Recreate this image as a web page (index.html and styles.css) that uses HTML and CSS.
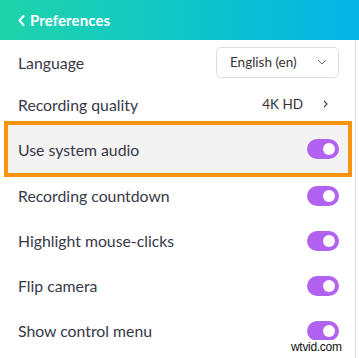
FILE: index.html
```html
<!DOCTYPE html>
<html>
<head>
<meta charset="utf-8">
<link rel="stylesheet" href="styles.css">
</head>
<body>
<div class="page">
  <header class="header">
    <svg class="back" width="7" height="11" viewBox="0 0 7 11"><path d="M5.5 1 L1.5 5.5 L5.5 10" fill="none" stroke="#fff" stroke-width="2" stroke-linecap="round" stroke-linejoin="round"/></svg>
    <span class="title">Preferences</span>
  </header>
  <main class="list">
    <div class="row row-lang">
      <span class="label">Language</span>
      <div class="select">
        <span>English (en)</span>
        <svg width="10" height="6" viewBox="0 0 10 6"><path d="M1 1 L5 5 L9 1" fill="none" stroke="#666" stroke-width="1"/></svg>
      </div>
    </div>
    <div class="row row-quality">
      <span class="label">Recording quality</span>
      <div class="value">
        <span>4K HD</span>
        <svg width="5" height="8" viewBox="0 0 5 8"><path d="M1 1 L4 4 L1 7" fill="none" stroke="#444" stroke-width="1.1"/></svg>
      </div>
    </div>
    <div class="row row-audio">
      <span class="label">Use system audio</span>
      <span class="toggle"></span>
    </div>
    <div class="row row-countdown">
      <span class="label">Recording countdown</span>
      <span class="toggle"></span>
    </div>
    <div class="row">
      <span class="label">Highlight mouse-clicks</span>
      <span class="toggle"></span>
    </div>
    <div class="row">
      <span class="label">Flip camera</span>
      <span class="toggle"></span>
    </div>
    <div class="row">
      <span class="label">Show control menu</span>
      <span class="toggle"></span>
    </div>
  </main>
  <div class="watermark">wtvid.com</div>
</div>
</body>
</html>
```
FILE: styles.css
```css
* { box-sizing: border-box; }
html, body { margin: 0; padding: 0; background: #fff; }
body { font-family: Lato, "Open Sans", sans-serif; color: #383848; }
.page { position: relative; width: 359px; height: 358px; overflow: hidden; }
.header {
  height: 40px;
  background: linear-gradient(90deg, #1fd3aa 0%, #10c6c8 50%, #05b3e6 100%);
  display: flex;
  align-items: center;
  padding-left: 18px;
  gap: 5px;
  color: #fff;
}
.back { display: block; margin-top: 1px; }
.title { font-size: 15px; font-weight: 700; letter-spacing: 0.1px; }
.list {
  width: 356px;
  height: 318px;
  border-right: 1px solid #dcdcdc;
}
.row {
  height: 45px;
  display: flex;
  align-items: center;
  justify-content: space-between;
  padding: 0 16px 0 18px;
}
.label { font-size: 15.8px; }
.row-lang { height: 44px; }
.row-quality { height: 37px; padding-top: 3px; }
.row-audio {
  height: 56px;
  margin-left: 4px;
  margin-right: 3px;
  padding: 0 9px 0 10px;
  border: 4px solid #f7930c;
  background: #f3f3f4;
}
.row-countdown { height: 41px; padding-bottom: 4px; }
.select {
  width: 123px;
  height: 31px;
  border: 1px solid #dedede;
  border-radius: 5px;
  display: flex;
  align-items: center;
  justify-content: space-between;
  padding: 0 11px 0 13px;
  font-size: 13.5px;
  color: #333;
}
.select svg { display: block; }
.value {
  display: flex;
  align-items: center;
  gap: 20px;
  font-size: 13.5px;
  color: #333;
  padding-right: 11px;
}
.value svg { display: block; }
.toggle {
  position: relative;
  width: 32px;
  height: 20px;
  border-radius: 10px;
  background: #b262f1;
}
.toggle::after {
  content: "";
  position: absolute;
  right: 4px;
  top: 4px;
  width: 12px;
  height: 12px;
  border-radius: 50%;
  background: #fff;
}
.watermark {
  position: absolute;
  left: 290px;
  top: 340px;
  font-family: "Liberation Sans", Arial, sans-serif;
  font-size: 12px;
  color: #111;
  letter-spacing: -0.3px;
  background: #fff;
  padding: 0 1px;
}
```
